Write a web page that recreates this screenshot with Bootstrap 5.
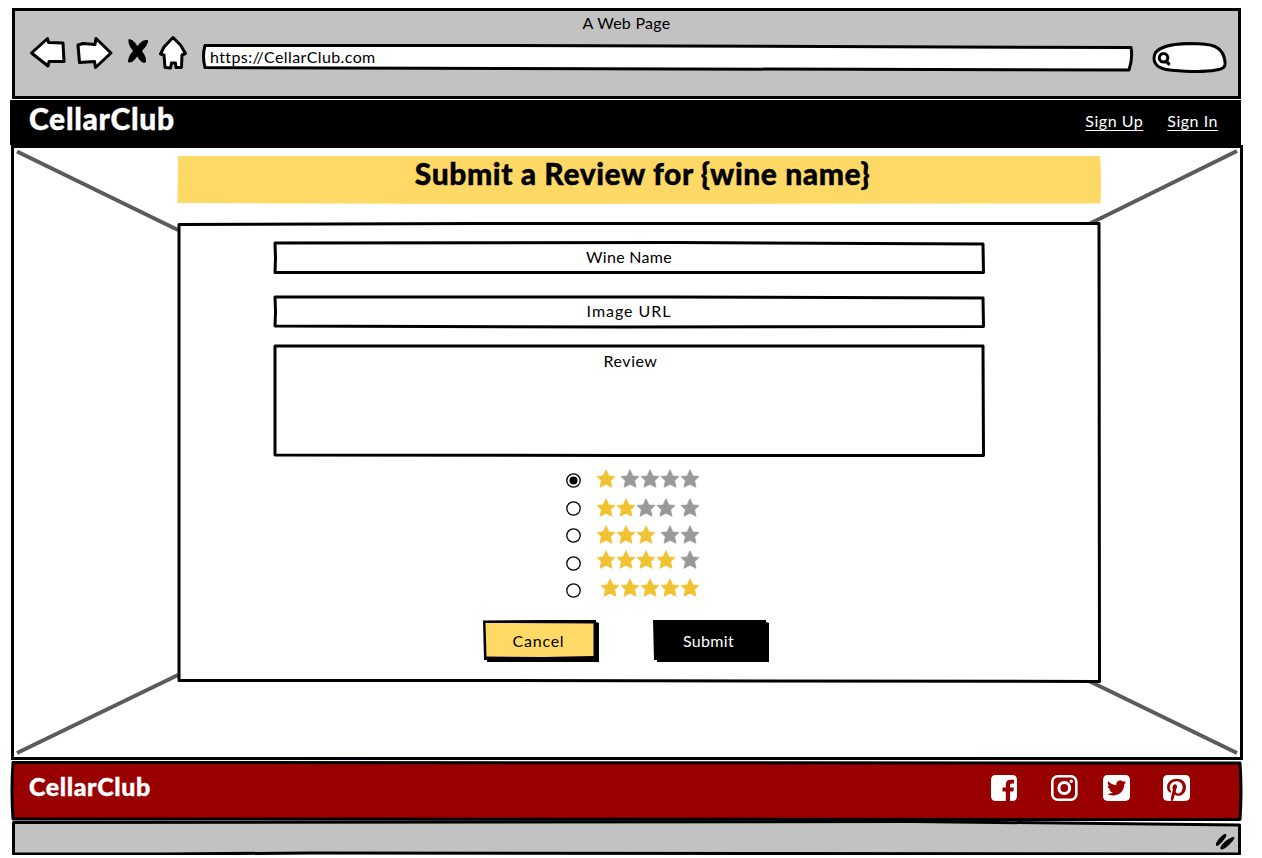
<!DOCTYPE html>
<html lang="en">
<head>
<meta charset="utf-8">
<meta name="viewport" content="width=device-width, initial-scale=1">
<title>CellarClub</title>
<link href="https://cdn.jsdelivr.net/npm/bootstrap@5.3.0/dist/css/bootstrap.min.css" rel="stylesheet">
<style>
body{font-family:"Lato","Open Sans",sans-serif;font-size:16px;line-height:20px;color:#000;background:#fff;overflow:hidden}
.frame{width:1233px;margin-left:10px;padding-top:8px}
.sketch{position:absolute;left:0;top:0;width:100%;height:100%;overflow:visible;z-index:0}
.sketch path{stroke:#000;stroke-width:3;stroke-linejoin:round}
.over{position:relative;z-index:1}
.chrome{height:91px;margin-left:2px;width:1229px;background:#c2c2c2;border:3px solid #000}
.chrome-title{height:20px;margin-top:2px;letter-spacing:.27px}
.toolbar-row{height:44px;margin-top:-3px}
.address{width:931px;height:27px;margin:11px 0 0 12px}
.address span{padding-left:8px;line-height:25px;letter-spacing:.39px}
.find{width:75px;height:31px;margin:11px 0 0 19px}
.topnav{height:45px;width:1231px;margin-top:1px;background:#000;padding:0 23px 0 19px}
.brand{color:#fff;font-weight:900;font-size:30px;line-height:36px;letter-spacing:.68px;-webkit-text-stroke:.4px #fff}
.topnav a{color:#fff;text-underline-offset:3px;text-decoration-thickness:1px;letter-spacing:.52px;line-height:20px;margin-top:11px}
.stage{width:1232px;height:615px;margin-left:1px;border:3px solid #000;padding:8px 0 0 163px}
.banner{width:924px;height:48px}
.banner .sketch path{stroke:none;fill:#ffd966}
.banner h1{font-size:30px;font-weight:900;line-height:34px;margin:0;letter-spacing:.57px;padding-left:7px;-webkit-text-stroke:.4px #000}
.panel{width:923px;height:460px;margin:18px 0 0 1px;padding:20px 0 0 95px}
.field{width:712px;height:32px;line-height:30px;letter-spacing:.3px}
.field-image{margin-top:22px;letter-spacing:.95px}
.review{height:112px;line-height:32px;margin-top:17px;letter-spacing:.5px;padding-left:3px}
.ratings{width:140px;margin:10px 0 0 291.5px}
.rating{height:27.5px}
.ring{width:15px;height:15px;margin:6px 0 0 1px}
.stars{width:106px;height:21px;margin-left:14px}
.s1{margin-top:2px}.s2{margin-top:3.5px}.s3{margin-top:3px}.s4{margin-top:.5px}.s5{margin-top:1px}
.actions{margin:15px 0 0 210px;gap:54px}
.act{width:116px;height:42px;padding:0 5px 0 0;border:0;border-radius:0;line-height:40px;font-size:16px;position:relative}
.act-cancel,.act-cancel:hover{color:#000;letter-spacing:.75px}
.act-submit,.act-submit:hover{color:#fff;letter-spacing:.3px}
.foot{width:1231px;height:60px;margin:1px 0 0 1px;padding:0 0 0 18px;position:relative}
.foot-brand{font-size:25px;line-height:30px;letter-spacing:.6px;margin-top:10px}
.social{margin:14px 52px 0 0}
.status{width:1229px;height:34px;margin-left:2px;position:relative}
</style>
</head>
<body>
<svg width="0" height="0" class="d-none"><defs>
  <path id="star" stroke-width=".8" stroke-linejoin="round" d="M0 -9.200L2.900 -3L9 -2.600L4.600 1.800L6 8.300L0 5.200L-6 8.300L-4.600 1.800L-9 -2.600L-2.900 -3Z"/>
</defs></svg>
<div class="frame">
  <header class="chrome">
    <div class="chrome-title text-center">A Web Page</div>
    <div class="toolbar-row d-flex align-items-center">
      <svg class="flex-shrink-0" width="175" height="44" viewBox="15 30 175 44" fill="#fff" stroke="#000" stroke-width="3" stroke-linejoin="round" stroke-linecap="round">
        <path d="M31.500 53L47.500 38.500L48.500 42.500L63 43L64 61.500L49 61.500L48 66Z"/>
        <path d="M78 45L83 43.500L95 44.500L96 38.500L111 53L95.500 67.500L94.500 61.500L79.500 62.500Z"/>
        <path d="M129 40c3-1 6 3 8.500 7c2-4 6-7 10-6.500c0 4-3 7-6 10.500c3 4 5 8 3.500 11.500c-4 0-6-4-8-7c-2 4-5 7-8.500 6.500c0-4 2-8 5-11c-3-4-5-7-4.500-11Z" fill="#000" stroke="#000" stroke-width="1"/>
        <path d="M173 37.500L180.500 45L185.500 53.500L182 55L181.500 67.500L176 67.500L175.500 63L171.500 63L170.500 68L165 67.500L164 55L160.500 54L164 47Z"/>
      </svg>
      <div class="address position-relative">
        <svg class="sketch" viewBox="0 0 931 27" fill="#fff"><path d="M3 1.500L300 1.500L929 3.500Q931 14 927 26L300 24.500L3 23.500Q0 12 3 1.500Z"/></svg>
        <span class="over">https://CellarClub.com</span>
      </div>
      <div class="find position-relative">
        <svg class="sketch" viewBox="0 0 75 31" fill="#fff"><path d="M2 16C2 5 17 2 38 1.500C62 1.500 69 5 72 15C75 25 72 27 64 28C48 31 29 29 18 28C8 27 2 24 2 16Z"/><path d="M11.500 11.500a4.300 4.300 0 1 0 .1 0M14.500 19L17.500 23" fill="none"/></svg>
      </div>
    </div>
  </header>

  <nav class="topnav d-flex justify-content-between">
    <span class="brand">CellarClub</span>
    <div class="d-flex gap-4"><a href="#">Sign Up</a><a href="#">Sign In</a></div>
  </nav>

  <main class="stage position-relative">
    <svg class="sketch" viewBox="14 149 1226 609"><path style="stroke:#5b5b5b;stroke-width:4" d="M17 152.500L178 231M1237 152L1089 225M17 754L178 676M1237 754L1089 682"/></svg>
    <div class="banner over text-center">
      <svg class="sketch" viewBox="0 0 924 48"><path d="M1 0L923 0Q925 24 923.500 47.500L300 48L.5 47Z"/></svg>
      <h1 class="over">Submit a Review for {wine name}</h1>
    </div>
    <form class="panel over">
      <svg class="sketch" viewBox="0 0 923 460" fill="#fff"><path d="M1 2.500L300 1.500L921 1.500L921.500 459.500L300 458.500L1 458.500Z"/></svg>
      <div class="over">
        <div class="field position-relative text-center"><svg class="sketch" viewBox="0 0 712 32" fill="#fff"><path d="M2 1L400 .5L710 2L710.500 30.500L350 30.500L2 30.500L2.500 16Z"/></svg><span class="over">Wine Name</span></div>
        <div class="field field-image position-relative text-center"><svg class="sketch" viewBox="0 0 712 32" fill="#fff"><path d="M2 1L400 1L710 2L710.500 30.500L350 31L2 30L2.500 16Z"/></svg><span class="over">Image URL</span></div>
        <div class="field review position-relative text-center"><svg class="sketch" viewBox="0 0 712 112" fill="#fff"><path d="M2 1L710 1L710.500 110.500L350 110.500L2 110Z"/></svg><span class="over">Review</span></div>

        <div class="ratings">
          <div class="rating d-flex"><svg class="ring" viewBox="0 0 15 15"><circle cx="7.500" cy="7.500" r="6.700" fill="#fff" stroke="#000" stroke-width="1.300"/><circle cx="7.500" cy="7.500" r="4"/></svg>
            <svg class="stars s1" viewBox="0 0 106 21" fill="#999" stroke="#999"><use href="#star" x="11" y="10" fill="#f1c232" stroke="#f1c232"/><use href="#star" x="35" y="10"/><use href="#star" x="55" y="10"/><use href="#star" x="75" y="10"/><use href="#star" x="95" y="10"/></svg></div>
          <div class="rating d-flex"><svg class="ring" viewBox="0 0 15 15"><circle cx="7.500" cy="7.500" r="6.700" fill="#fff" stroke="#000" stroke-width="1.300"/></svg>
            <svg class="stars s2" viewBox="0 0 106 21" fill="#f1c232" stroke="#f1c232"><use href="#star" x="11" y="10"/><use href="#star" x="31" y="10"/><g fill="#999" stroke="#999"><use href="#star" x="51" y="10"/><use href="#star" x="71" y="10"/><use href="#star" x="95" y="10"/></g></svg></div>
          <div class="rating d-flex"><svg class="ring" viewBox="0 0 15 15"><circle cx="7.500" cy="7.500" r="6.700" fill="#fff" stroke="#000" stroke-width="1.300"/></svg>
            <svg class="stars s3" viewBox="0 0 106 21" fill="#f1c232" stroke="#f1c232"><use href="#star" x="11" y="10"/><use href="#star" x="31" y="10"/><use href="#star" x="51" y="10"/><g fill="#999" stroke="#999"><use href="#star" x="75" y="10"/><use href="#star" x="95" y="10"/></g></svg></div>
          <div class="rating d-flex"><svg class="ring" viewBox="0 0 15 15"><circle cx="7.500" cy="7.500" r="6.700" fill="#fff" stroke="#000" stroke-width="1.300"/></svg>
            <svg class="stars s4" viewBox="0 0 106 21" fill="#f1c232" stroke="#f1c232"><use href="#star" x="11" y="10"/><use href="#star" x="31" y="10"/><use href="#star" x="51" y="10"/><use href="#star" x="71" y="10"/><use href="#star" x="95" y="10" fill="#999" stroke="#999"/></svg></div>
          <div class="rating d-flex"><svg class="ring" viewBox="0 0 15 15"><circle cx="7.500" cy="7.500" r="6.700" fill="#fff" stroke="#000" stroke-width="1.300"/></svg>
            <svg class="stars s5" viewBox="0 0 106 21" fill="#f1c232" stroke="#f1c232"><use href="#star" x="15" y="10"/><use href="#star" x="35" y="10"/><use href="#star" x="55" y="10"/><use href="#star" x="75" y="10"/><use href="#star" x="95" y="10"/></svg></div>
        </div>

        <div class="actions d-flex">
          <button type="button" class="btn act act-cancel"><svg class="sketch" viewBox="0 0 116 42"><path style="stroke:none" d="M0 .5L60 0L113 0L113 2L116 3L116 42L4 42L4 40L1 40Z"/><path style="stroke:none" fill="#ffd966" d="M2.500 3L110.500 3.500L110.500 36L60 37L3.500 36.500Z"/></svg><span class="over">Cancel</span></button>
          <button type="button" class="btn act act-submit"><svg class="sketch" viewBox="0 0 116 42"><path style="stroke:none" d="M0 0L113 0L113 2L116 3L116 42L4 42L4 40L1 40Z"/></svg><span class="over">Submit</span></button>
        </div>
      </div>
    </form>
  </main>

  <footer class="foot d-flex justify-content-between">
    <svg class="sketch" viewBox="0 0 1231 60" fill="#900"><path d="M2 1.500L1229 2Q1231 30 1229 58.500L2 58Q0 30 2 1.500Z"/></svg>
    <span class="brand foot-brand over">CellarClub</span>
    <div class="social d-flex over">
      <svg width="26" height="26" viewBox="0 0 26 26"><path fill="#fff" d="M5 0H21Q26 0 26 5V21Q26 26 21 26H19V16.500H22.300L22.900 12.500H19V10Q19 8.500 21 8.500H23V4.700H19.500Q14.800 4.700 14.800 9.500V12.500H11.500V16.500H14.800V26H5Q0 26 0 21V5Q0 0 5 0Z"/></svg>
      <svg width="27" height="26" viewBox="0 0 27 26" style="margin-left:34px" fill="none" stroke="#fff"><rect x="1.300" y="1.300" width="24" height="23.400" rx="5.500" stroke-width="2.600"/><circle cx="13.300" cy="13" r="5.400" stroke-width="3"/><circle cx="20.300" cy="6.200" r="1.700" fill="#fff" stroke="none"/></svg>
      <svg width="27" height="26" viewBox="0 32 448 448" preserveAspectRatio="none" style="margin-left:25px" fill="#fff"><path d="M368 32H80C30 32 0 62 0 112v288c0 50 30 80 80 80h288c50 0 80-30 80-80V112c0-50-30-80-80-80zm-16.100 158.800c.2 2.800.2 5.700.2 8.500 0 86.700-66 186.600-186.600 186.600-37.200 0-71.700-10.800-100.700-29.400 5.300.6 10.400.8 15.800.8 30.700 0 58.900-10.400 81.400-28-28.800-.6-53-19.500-61.300-45.500 10.100 1.500 19.200 1.500 29.600-1.200-30-6.100-52.500-32.500-52.500-64.400v-.8c8.700 4.900 18.900 7.900 29.600 8.300a65.447 65.447 0 0 1-29.200-54.600c0-12.200 3.200-23.400 8.900-33.100 32.300 39.800 80.800 65.800 135.200 68.600-9.300-44.500 24-80.600 64-80.600 18.900 0 35.900 7.900 47.900 20.700 14.800-2.800 29-8.300 41.600-15.800-4.900 15.200-15.200 28-28.800 36.100 13.200-1.400 26-5.100 37.800-10.200-8.900 13.100-20.100 24.700-32.900 34z"/></svg>
      <svg width="27" height="26" viewBox="0 32 448 448" preserveAspectRatio="none" style="margin-left:33px" fill="#fff"><path d="M448 112v288c0 50-30 80-80 80H154.400c9.800-16.400 22.400-40 27.400-59.300 3-11.500 15.300-58.400 15.300-58.400 8 15.300 31.400 28.200 56.300 28.200 74.100 0 127.400-68.100 127.400-152.700 0-81.100-66.200-141.800-151.400-141.800-106 0-162.200 71.100-162.200 148.600 0 36 19.200 80.800 49.800 95.100 4.700 2.200 7.100 1.200 8.200-3.300.8-3.400 5-20.100 6.800-27.800.6-2.500.3-4.600-1.700-7-10.100-12.300-18.300-34.900-18.300-56 0-54.200 41-106.600 110.900-106.600 60.300 0 102.600 41.100 102.600 99.900 0 66.400-33.500 112.400-77.200 112.400-24.100 0-42.100-19.900-36.400-44.400 6.900-29.200 20.300-60.700 20.300-81.800 0-53-75.500-45.700-75.500 25 0 21.700 7.300 36.500 7.300 36.500-31.400 132.800-36.100 134.500-29.600 192.600l2.200.8H80c-50 0-80-30-80-80V112c0-50 30-80 80-80h288c50 0 80 30 80 80z"/></svg>
    </div>
  </footer>
  <div class="status">
    <svg class="sketch" viewBox="0 0 1229 34" fill="#c2c2c2"><path d="M1.500 1.500L900 .5L1227.500 4V33L300 32L150 33L1.500 33Z"/><path style="stroke-width:1" fill="#000" d="M1204.500 24.500C1203.500 22 1208 16 1212.500 13.500C1216 12.500 1213 17 1210 20.500Q1206 25 1204.500 24.500ZM1209 28C1208 25 1213 20 1219.500 17C1224 15 1222 18 1218 22.500Q1212 28.500 1209 28Z"/></svg>
  </div>
</div>
<script src="https://cdn.jsdelivr.net/npm/bootstrap@5.3.0/dist/js/bootstrap.bundle.min.js"></script>
</body>
</html>
